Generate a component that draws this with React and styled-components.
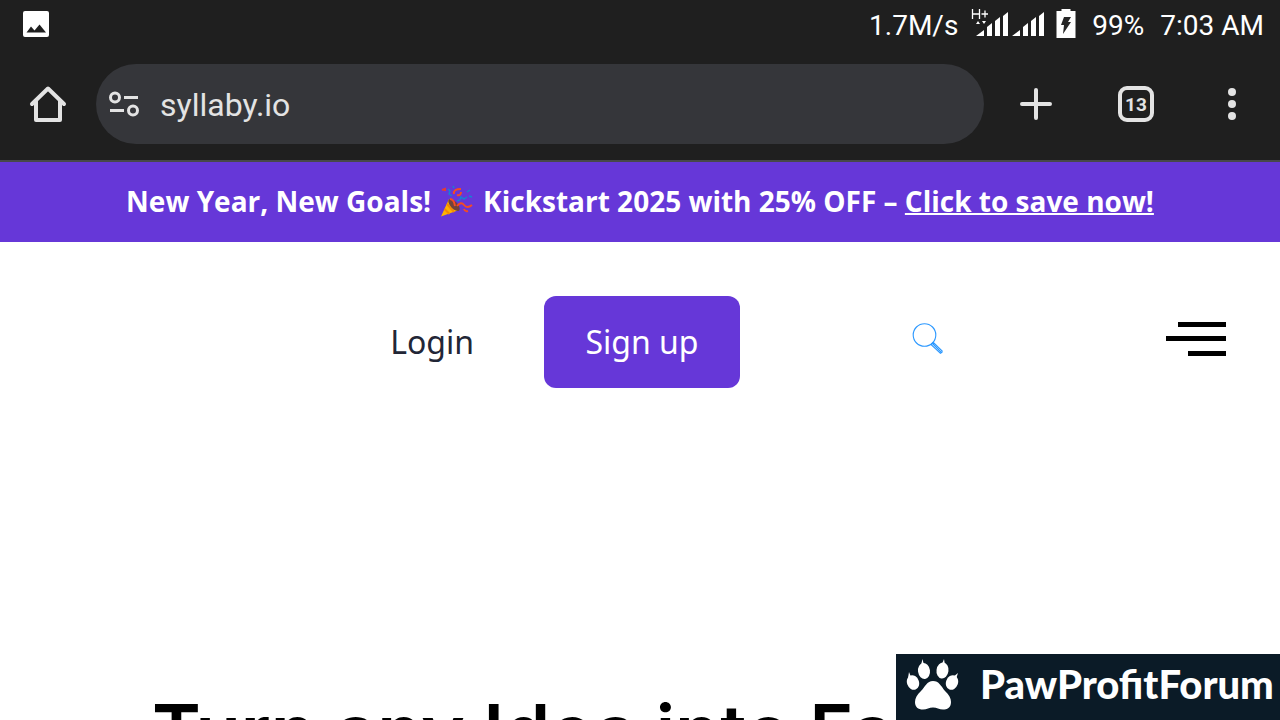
import React from "react";
import styled, { createGlobalStyle } from "styled-components";

const Global = createGlobalStyle`
  *, *::before, *::after { box-sizing: border-box; }
  body { margin: 0; background: #fff; font-family: Roboto, "Liberation Sans", sans-serif; }
  button, input { font: inherit; color: inherit; border: 0; padding: 0; background: none; }
  button { cursor: pointer; }
  svg { display: block; flex: none; }
`;

const Screen = styled.div`
  display: flex;
  flex-direction: column;
  height: 100vh;
  overflow: hidden;
`;

const Chrome = styled.header`
  flex: none;
  background: #1f1f1f;
  border-bottom: 2px solid #47484a;
`;

const StatusBar = styled.div`
  display: flex;
  align-items: center;
  justify-content: space-between;
  height: 48px;
  padding: 0 16px 0 20px;
  color: #fff;
  font-size: 28px;
`;

const StatusGroup = styled.div`
  display: flex;
  align-items: center;
  gap: ${(p) => p.$gap}px;
`;

const StatusText = styled.span`
  padding-top: 4px;
  line-height: 44px;
`;

const Toolbar = styled.div`
  display: flex;
  align-items: center;
  height: 112px;
  color: #e3e3e3;
`;

const ToolButton = styled.button`
  display: flex;
  flex: none;
  align-items: center;
  justify-content: center;
  width: ${(p) => (p.$wide ? 104 : 96)}px;
  height: 80px;
`;

const AddressBar = styled.label`
  display: flex;
  flex: 1;
  align-items: center;
  gap: 20px;
  height: 80px;
  padding: 0 40px 0 12px;
  border-radius: 40px;
  background: #35363a;
`;

const AddressInput = styled.input`
  flex: 1;
  min-width: 0;
  height: 48px;
  padding-top: 2px;
  font-size: 32px;
  outline: none;
`;

const TabCount = styled.span`
  display: flex;
  align-items: center;
  justify-content: center;
  width: 36px;
  height: 36px;
  border: 4px solid #e3e3e3;
  border-radius: 9px;
  font-size: 19px;
  font-weight: 700;
`;

const Banner = styled.p`
  display: flex;
  flex: none;
  align-items: center;
  justify-content: center;
  gap: 9px;
  min-height: 80px;
  margin: 0;
  padding-bottom: 2px;
  background: #6637d8;
  color: #fff;
  font-family: "Open Sans", "Noto Sans", sans-serif;
  font-size: 28px;
  font-weight: 700;
  line-height: 40px;
  white-space: nowrap;
`;

const BannerLink = styled.a`
  color: inherit;
  text-decoration: underline;
  text-decoration-thickness: 2px;
`;

const Nav = styled.nav`
  display: flex;
  flex: none;
  align-items: center;
  justify-content: flex-end;
  padding: 54px;
  font-family: "Noto Sans", "Open Sans", sans-serif;
  font-size: 32px;
  line-height: 44px;
`;

const LoginLink = styled.a`
  margin-right: 70px;
  color: #222636;
  text-decoration: none;
`;

const SignUp = styled.a`
  width: 196px;
  padding: 24px 0;
  border-radius: 12px;
  background: #6637d8;
  color: #fff;
  text-align: center;
  text-decoration: none;
`;

const IconButton = styled.button`
  margin-left: ${(p) => p.$space}px;
  padding-bottom: 7px;
`;

const Hero = styled.main`
  padding: 243px 152px 0;
`;

const Title = styled.h1`
  margin: 0;
  color: #000;
  font-family: Inter, "Liberation Sans", sans-serif;
  font-size: 74px;
  font-weight: 600;
  line-height: 92px;
  white-space: nowrap;
`;

const ForumBadge = styled.aside`
  position: fixed;
  right: 0;
  bottom: 0;
  display: flex;
  align-items: center;
  gap: 20px;
  width: 384px;
  height: 66px;
  padding: 0 0 6px 10px;
  background: #0b1b27;
  color: #fff;
  font-family: Lato, "Liberation Sans", sans-serif;
  font-size: 40px;
  font-weight: 900;
  white-space: nowrap;
`;

const PictureIcon = () => (
  <svg width="32" height="32" viewBox="0 0 32 32">
    <path fillRule="evenodd" fill="#fff" d="M5 3h22q2 0 2 2v22q0 2-2 2H5q-2 0-2-2V5q0-2 2-2zm1.500 21.500h19.500l-6.500-8-5 6-3.500-4z" />
  </svg>
);

const SignalIcon = () => (
  <svg width="76" height="32" viewBox="0 0 76 32" fill="#fff">
    <path d="M2.500 1v10M9.500 1v10M2.500 6h7M11.500 6h6.500M15 2.500v7" stroke="#fff" strokeWidth="1.300" fill="none" />
    <path d="M6 16l2-3 2 3zM12 13h4l-2 3z" />
    <path d="M6 28l8-6v6zM17 19l5-4v13h-5zM25 13l5-4v19h-5zM33 8l5-4v24h-5z" />
    <path d="M42 28l8-6v6zM53 19l5-4v13h-5zM61 13l5-4v19h-5zM69 8l5-4v24h-5z" />
  </svg>
);

const BatteryIcon = () => (
  <svg width="20" height="32" viewBox="0 0 20 32">
    <path fill="#fff" d="M5.500 1h9v2H19.500v27H.5V3h5z" />
    <path fill="#252525" d="M8 9h7l-3 5h3l-8 12 1-9H5z" />
  </svg>
);

const HomeIcon = () => (
  <svg width="40" height="40" viewBox="0 0 40 40" fill="none" stroke="#e3e3e3" strokeWidth="4" strokeLinecap="round" strokeLinejoin="round">
    <path d="M4 20L20 4.500l16 15.500" />
    <path d="M8 17v19h24V17" />
  </svg>
);

const TuneIcon = () => (
  <svg width="32" height="32" viewBox="0 0 32 32" fill="none" stroke="#e3e3e3" strokeWidth="3">
    <circle cx="7" cy="9.500" r="4.500" />
    <path d="M16 9.500h14M2 22.500h14" />
    <circle cx="25" cy="22.500" r="4.500" />
  </svg>
);

const PlusIcon = () => (
  <svg width="32" height="32" viewBox="0 0 32 32" stroke="#e3e3e3" strokeWidth="4" strokeLinecap="round">
    <path d="M16 2v28M2 16h28" />
  </svg>
);

const MoreIcon = () => (
  <svg width="8" height="32" viewBox="0 0 8 32" fill="#e3e3e3">
    <circle cx="4" cy="4" r="4" />
    <circle cx="4" cy="16" r="4" />
    <circle cx="4" cy="28" r="4" />
  </svg>
);

const PartyIcon = () => (
  <svg width="34" height="34" viewBox="0 0 34 34" fill="none">
    <path fill="#ffb300" d="M9 15L1 32.500 19 26z" />
    <path stroke="#f58a00" strokeWidth="2" d="M7 20l7 8M4.500 25l5 5" />
    <ellipse cx="14" cy="21" rx="3.500" ry="7.500" transform="rotate(-43 14 21)" fill="#70433c" />
    <path stroke="#f44b24" strokeWidth="2" d="M10 15q4 0 5 7M14 10q-1-5 7-5M17 11q4 1 4-3M17 22q4-5 7-1t8 0M24 25q1 3 4 2" />
    <path stroke="#e33b37" strokeWidth="2" d="M2 6l3-1v2" />
    <path stroke="#1783d1" strokeWidth="1.500" d="M8 5l2 2-1 3 3 2M17 17l3-1 1-3 3 2 3-2M13 2l1 2M27 8l3-2M29 12l3 1" />
  </svg>
);

const SearchIcon = () => (
  <svg width="32" height="32" viewBox="0 0 32 32" fill="none" stroke="#2b98ff" strokeWidth="1.100">
    <circle cx="12.500" cy="12" r="11.300" />
    <path d="M19 21.500l2.200-2.200 9 8.800q.3 1.700-1.700 2.200zM20.500 20.500l8.800 8.800" />
  </svg>
);

const MenuIcon = () => (
  <svg width="60" height="34" viewBox="0 0 60 34">
    <path d="M12 0h48v5H12zM0 14h60v5H0zM22 29h38v5H22z" />
  </svg>
);

const PawIcon = () => (
  <svg width="54" height="54" viewBox="0 3 54 54" fill="#fff">
    <ellipse cx="7" cy="28.500" rx="6" ry="7.500" transform="rotate(-20 7 28.500)" />
    <ellipse cx="18" cy="17" rx="6" ry="8" transform="rotate(-8 18 17)" />
    <ellipse cx="36.500" cy="16.500" rx="6" ry="8" transform="rotate(8 36.500 16.500)" />
    <ellipse cx="46" cy="28.500" rx="6" ry="7.500" transform="rotate(20 46 28.500)" />
    <path d="M2 24l1-6 2 5zM15 11l1.500-6 1.500 6zM36 10l2-5 1 6zM47 23l5-4-2 6z" />
    <path d="M27 27c6 0 8 5 12 10 4 4 6 7 6 11 0 6-4 7.500-8 7.500-4 0-6-2-10-2s-6 2-10 2c-5 0-8-2.500-8-7.500 0-4 2-7 6-11s6-10 12-10z" />
  </svg>
);

export default function App() {
  return (
    <Screen>
      <Global />
      <Chrome>
        <StatusBar>
          <PictureIcon />
          <StatusGroup $gap={16}>
            <StatusGroup $gap={12}>
              <StatusText>1.7M/s</StatusText>
              <StatusGroup $gap={10}>
                <SignalIcon />
                <BatteryIcon />
              </StatusGroup>
            </StatusGroup>
            <StatusText>99%</StatusText>
            <StatusText>7:03 AM</StatusText>
          </StatusGroup>
        </StatusBar>
        <Toolbar>
          <ToolButton aria-label="Home"><HomeIcon /></ToolButton>
          <AddressBar>
            <TuneIcon />
            <AddressInput type="text" aria-label="Address" defaultValue="syllaby.io" />
          </AddressBar>
          <ToolButton $wide aria-label="New tab"><PlusIcon /></ToolButton>
          <ToolButton aria-label="Open tabs"><TabCount>13</TabCount></ToolButton>
          <ToolButton aria-label="More options"><MoreIcon /></ToolButton>
        </Toolbar>
      </Chrome>
      <Banner>
        <span>New Year, New Goals!</span>
        <PartyIcon />
        <span>
          Kickstart 2025 with 25% OFF – <BannerLink href="#offer">Click to save now!</BannerLink>
        </span>
      </Banner>
      <Nav>
        <LoginLink href="#login">Login</LoginLink>
        <SignUp href="#signup">Sign up</SignUp>
        <IconButton $space={172} aria-label="Search"><SearchIcon /></IconButton>
        <IconButton $space={222} aria-label="Menu"><MenuIcon /></IconButton>
      </Nav>
      <Hero>
        <Title>Turn any Idea into Fa</Title>
      </Hero>
      <ForumBadge>
        <PawIcon />
        <span>PawProfitForum</span>
      </ForumBadge>
    </Screen>
  );
}
